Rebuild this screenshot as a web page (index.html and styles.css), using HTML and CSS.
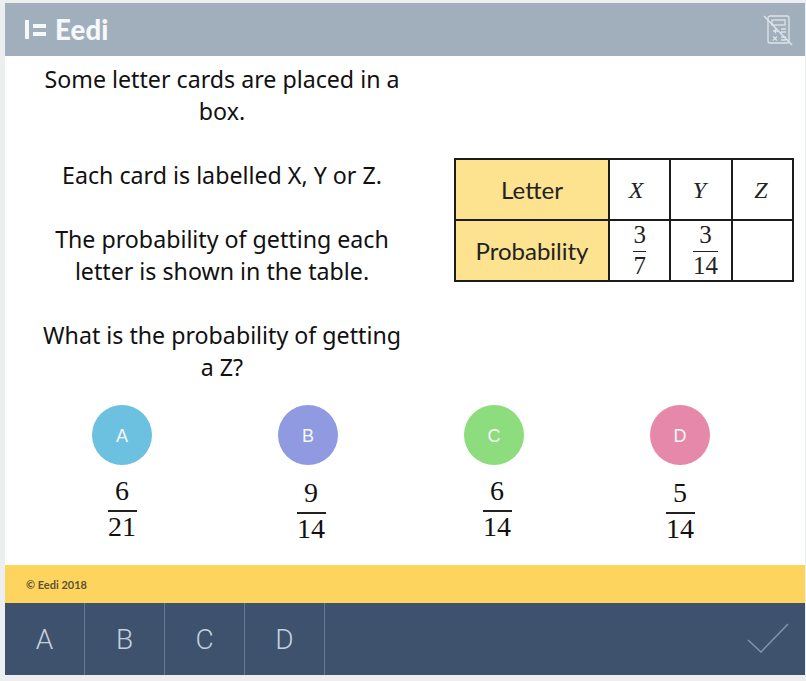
FILE: index.html
```html
<!DOCTYPE html>
<html lang="en">
<head>
<meta charset="utf-8">
<title>Eedi question</title>
<link rel="stylesheet" href="styles.css">
</head>
<body>
<div class="frame">
  <header class="topbar">
    <div class="brand"><span class="brand-mark"><i class="mark-bar"></i><span class="mark-eq"><i></i><i></i></span></span><span class="brand-name">Eedi</span></div>
    <svg class="calc" width="30" height="32" viewBox="0 0 30 32" fill="none" stroke="#dfe4e9" stroke-width="1.3">
      <rect x="5" y="2" width="21" height="27" rx="2"/>
      <rect x="9" y="6" width="13" height="5"/>
      <path d="M10 17h5M12.500 14.500v5M18 15h5M18 18h5M10 22.500l4 4M14 22.500l-4 4M18 23h5M18 26h5"/>
      <path d="M1 2L29 31" stroke-width="1.500"/>
    </svg>
  </header>
  <main class="content">
    <section class="question">
      <div class="prose">
        <p>Some letter cards are placed in a box.</p>
        <p>Each card is labelled X, Y or Z.</p>
        <p>The probability of getting each letter is shown in the table.</p>
        <p>What is the probability of getting a Z?</p>
      </div>
      <table class="ptable">
        <tr>
          <th>Letter</th>
          <td class="nudge-x"><em>X</em></td>
          <td class="nudge-y"><em>Y</em></td>
          <td class="nudge-y"><em>Z</em></td>
        </tr>
        <tr>
          <th>Probability</th>
          <td><span class="tfrac"><span class="tfrac-num">3</span><span class="tfrac-den">7</span></span></td>
          <td class="nudge-frac"><span class="tfrac"><span class="tfrac-num">3</span><span class="tfrac-den tfrac-wide">14</span></span></td>
          <td></td>
        </tr>
      </table>
    </section>
    <section class="options">
      <div class="option">
        <div class="bubble bubble-a">A</div>
        <div class="frac frac-high"><span class="num">6</span><span class="den">21</span></div>
      </div>
      <div class="option">
        <div class="bubble bubble-b">B</div>
        <div class="frac frac-shift"><span class="num">9</span><span class="den">14</span></div>
      </div>
      <div class="option">
        <div class="bubble bubble-c">C</div>
        <div class="frac frac-high frac-shift"><span class="num">6</span><span class="den">14</span></div>
      </div>
      <div class="option">
        <div class="bubble bubble-d">D</div>
        <div class="frac"><span class="num">5</span><span class="den">14</span></div>
      </div>
    </section>
  </main>
  <div class="copyright">© Eedi 2018</div>
  <nav class="answers">
    <button class="key">A</button>
    <button class="key">B</button>
    <button class="key">C</button>
    <button class="key">D</button>
    <svg class="tick" width="42" height="30" viewBox="0 0 42 30" fill="none" stroke="#7d93ad" stroke-width="1.600"><path d="M1 17L14 29L41 1"/></svg>
  </nav>
</div>
</body>
</html>
```
FILE: styles.css
```css
* { box-sizing: border-box; }
html, body { margin: 0; height: 100%; }
body {
  background: #eceeef;
  padding: 3px 1px 6px 5px;
  font-family: "Noto Sans", "Open Sans", sans-serif;
  overflow: hidden;
}
.frame {
  display: flex;
  flex-direction: column;
  height: 672px;
  background: #fff;
}
.topbar {
  flex: 0 0 53px;
  background: #a1afbc;
  display: flex;
  align-items: center;
  justify-content: space-between;
  padding: 0 12px 0 20px;
}
.brand { display: flex; align-items: center; gap: 9px; color: #f6f8fa; }
.brand-mark { display: flex; align-items: center; gap: 4px; height: 19px; }
.mark-bar { width: 4px; height: 19px; background: #f6f8fa; }
.mark-eq { display: flex; flex-direction: column; gap: 4px; }
.mark-eq i { display: block; width: 13px; height: 4px; background: #f6f8fa; }
.brand-name { font: 900 27.500px/1 "Lato", sans-serif; letter-spacing: 0.2px; }
.content { flex: 1; display: flex; flex-direction: column; }
.question { display: flex; height: 346px; }
.prose {
  width: 434px;
  padding: 7px 36px 0 36px;
  text-align: center;
  font-size: 23.200px;
  line-height: 32px;
  color: #111;
}
.prose p { margin: 0 0 32px; }
.ptable {
  border-collapse: collapse;
  margin: 102px 0 0 15px;
  width: 340px;
  height: 124px;
  table-layout: fixed;
  align-self: flex-start;
}
.ptable th, .ptable td {
  border: 2px solid #1c1c1c;
  padding: 0;
  text-align: center;
  height: 61px;
  color: #222;
}
.ptable th {
  width: 154px;
  background: #fde28f;
  font: 400 24px/1 "Lato", sans-serif;
}
.ptable td { font: 24px/1 "Liberation Serif", serif; }
.ptable .nudge-x { padding-right: 7px; }
.ptable .nudge-y { padding-right: 3px; }
.ptable .nudge-frac { padding-left: 9px; }
.tfrac { display: inline-flex; flex-direction: column; align-items: center; font-size: 25px; line-height: 28px; }
.tfrac-num { padding-bottom: 2px; }
.tfrac-den { border-top: 1.500px solid #222; min-width: 13px; text-align: center; }
.tfrac-wide { min-width: 25px; }
.options {
  display: grid;
  grid-template-columns: repeat(4, 186px);
  padding-left: 24px;
  margin-top: 3px;
}
.option { display: flex; flex-direction: column; align-items: center; }
.bubble {
  width: 60px;
  height: 60px;
  border-radius: 50%;
  display: flex;
  align-items: center;
  justify-content: center;
  padding-top: 2px;
  color: #f4f8fb;
  font: 18px "Liberation Sans", Arial, sans-serif;
}
.bubble-a { background: #6cc0e0; }
.bubble-b { background: #8f9ae0; }
.bubble-c { background: #8ddc7d; }
.bubble-d { background: #e688a9; }
.frac {
  display: flex;
  flex-direction: column;
  align-items: center;
  margin-top: 11px;
  font: 28px/34px "Liberation Serif", serif;
  color: #111;
}
.frac-high { margin-top: 9px; }
.frac-shift { margin-left: 6px; }
.num { padding-bottom: 2px; }
.den { border-top: 2px solid #222; min-width: 29px; text-align: center; line-height: 30px; }
.copyright {
  flex: 0 0 38px;
  background: #fdd55e;
  padding-left: 21px;
  display: flex;
  align-items: center;
  font: 700 11px "Lato", sans-serif;
  color: #5d5233;
}
.answers {
  flex: 0 0 72px;
  background: #3e526e;
  display: flex;
  align-items: center;
  position: relative;
}
.key {
  width: 80px;
  height: 72px;
  border: 0;
  border-right: 1px solid #65799a;
  background: none;
  color: #c3d0de;
  font: 300 28px "Roboto", sans-serif;
  padding: 0;
}
.tick { position: absolute; right: 16px; top: 20px; }
```
